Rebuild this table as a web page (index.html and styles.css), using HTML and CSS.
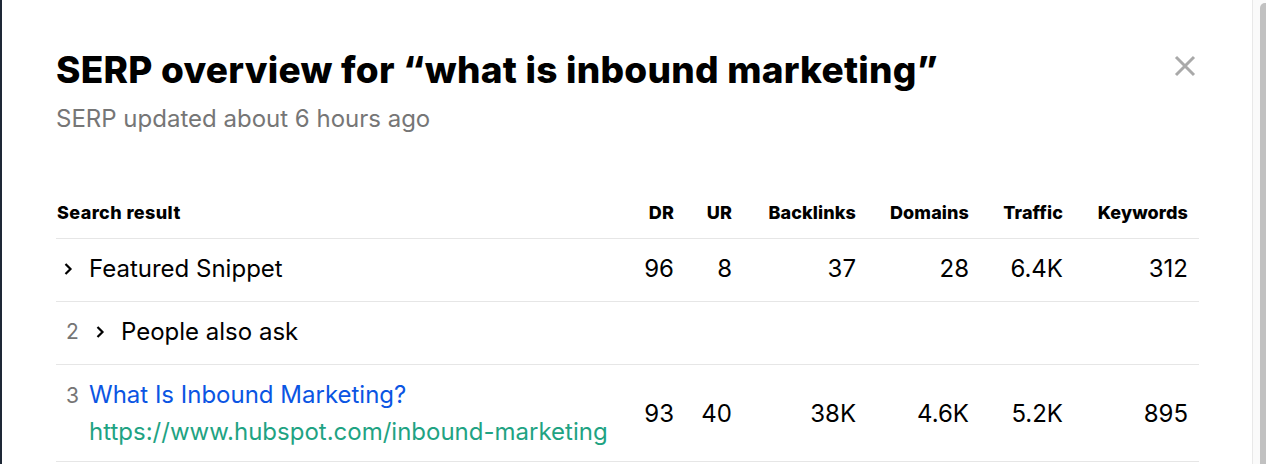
FILE: index.html
```html
<!DOCTYPE html>
<html lang="en">
<head>
    <meta charset="UTF-8">
    <meta name="viewport" content="width=device-width, initial-scale=1.0">
    <title>SERP overview</title>
    <link rel="stylesheet" href="styles.css">
</head>
<body>
    <div class="backdrop-edge"></div>

    <div class="modal">
        <div class="modal-head">
            <div>
                <h1 class="modal-title">SERP overview for “what is inbound marketing”</h1>
                <p class="modal-sub">SERP updated about 6 hours ago</p>
            </div>
            <button class="close-btn" aria-label="Close">
                <svg width="22" height="22" viewBox="0 0 22 22">
                    <path d="M2 2 L20 20 M20 2 L2 20" stroke="#a9a9a9" stroke-width="3" fill="none"/>
                </svg>
            </button>
        </div>

        <table class="serp-table">
            <colgroup>
                <col class="col-result">
                <col class="col-dr">
                <col class="col-ur">
                <col class="col-backlinks">
                <col class="col-domains">
                <col class="col-traffic">
                <col class="col-keywords">
            </colgroup>
            <thead>
                <tr>
                    <th class="left">Search result</th>
                    <th>DR</th>
                    <th>UR</th>
                    <th>Backlinks</th>
                    <th>Domains</th>
                    <th>Traffic</th>
                    <th>Keywords</th>
                </tr>
            </thead>
            <tbody>
                <tr>
                    <td class="left">
                        <div class="result">
                            <svg class="chevron first" width="10" height="14" viewBox="0 0 10 14">
                                <path d="M2.5 2 L7.5 7 L2.5 12" stroke="#000" stroke-width="2.2" fill="none"/>
                            </svg>
                            <span class="result-name">Featured Snippet</span>
                        </div>
                    </td>
                    <td>96</td>
                    <td>8</td>
                    <td>37</td>
                    <td>28</td>
                    <td>6.4K</td>
                    <td>312</td>
                </tr>
                <tr>
                    <td class="left">
                        <div class="result">
                            <span class="pos">2</span>
                            <svg class="chevron" width="10" height="14" viewBox="0 0 10 14">
                                <path d="M2.5 2 L7.5 7 L2.5 12" stroke="#000" stroke-width="2.2" fill="none"/>
                            </svg>
                            <span class="result-name">People also ask</span>
                        </div>
                    </td>
                    <td></td>
                    <td></td>
                    <td></td>
                    <td></td>
                    <td></td>
                    <td></td>
                </tr>
                <tr class="tall">
                    <td class="left">
                        <div class="result top">
                            <span class="pos">3</span>
                            <div class="link-block">
                                <a class="result-link" href="#">What Is Inbound Marketing?</a>
                                <span class="result-url">https://www.hubspot.com/inbound-marketing</span>
                            </div>
                        </div>
                    </td>
                    <td>93</td>
                    <td>40</td>
                    <td>38K</td>
                    <td>4.6K</td>
                    <td>5.2K</td>
                    <td>895</td>
                </tr>
            </tbody>
        </table>
    </div>

    <div class="scroll-track">
        <div class="scroll-thumb"></div>
    </div>
</body>
</html>
```

FILE: styles.css
```css
/* Reset default styles */
* {
  margin: 0;
  padding: 0;
  box-sizing: border-box;
}

body {
  font-family: Inter, "Liberation Sans", sans-serif;
  color: #000;
  background-color: #fff;
  display: flex;
  height: 464px;
  overflow: hidden;
}

.backdrop-edge {
  width: 2px;
  background-color: #1e2836;
}

.modal {
  flex: 1;
  padding: 48px 53px 0 54px;
}

.modal-head {
  display: flex;
  justify-content: space-between;
  align-items: flex-start;
}

.modal-title {
  font-size: 37px;
  line-height: 44px;
  font-weight: 800;
  letter-spacing: 0.25px;
}

.modal-sub {
  margin-top: 11px;
  font-size: 24px;
  line-height: 32px;
  color: #767676;
}

.close-btn {
  border: none;
  background: none;
  cursor: pointer;
  margin-top: 7px;
  margin-right: 3px;
}

/* Table */
.serp-table {
  margin-top: 67px;
  width: 1143px;
  border-collapse: collapse;
  table-layout: fixed;
}

.col-result { width: 565px; }
.col-dr { width: 64px; }
.col-ur { width: 58px; }
.col-backlinks { width: 124px; }
.col-domains { width: 113px; }
.col-traffic { width: 94px; }
.col-keywords { width: 125px; }

.serp-table th {
  font-size: 18px;
  line-height: 22px;
  font-weight: 800;
  letter-spacing: 0.1px;
  text-align: right;
  padding: 0 11px 14px 0;
  border-bottom: 1px solid #e6e6e6;
}

.serp-table th.left {
  text-align: left;
  padding-left: 1px;
  letter-spacing: 0.4px;
}

.serp-table td {
  font-size: 24px;
  line-height: 32px;
  text-align: right;
  padding: 14px 11px 16px 0;
  border-bottom: 1px solid #e6e6e6;
}

.serp-table td.left {
  text-align: left;
}

.serp-table tr.tall td {
  padding-top: 14px;
  padding-bottom: 13px;
}

.result {
  display: flex;
  align-items: center;
}

.result.top {
  align-items: baseline;
}

.pos {
  width: 33px;
  padding-left: 10px;
  color: #757575;
  font-size: 21px;
}

.chevron {
  margin-left: 6px;
  margin-right: 16px;
}

.chevron.first {
  margin-left: 7px;
}

.link-block {
  display: flex;
  flex-direction: column;
  gap: 5px;
}

.result-link {
  color: #0b55e3;
  text-decoration: none;
}

.result-url {
  color: #1fa383;
}

/* Fake window scrollbar */
.scroll-track {
  width: 14px;
  border-left: 1px solid #e8e8e8;
  background-color: #fafafa;
  padding: 3px 0 0 7px;
  overflow: hidden;
}

.scroll-thumb {
  width: 10px;
  height: 100%;
  background-color: #c1c1c1;
  border-radius: 5px 5px 0 0;
}
```
